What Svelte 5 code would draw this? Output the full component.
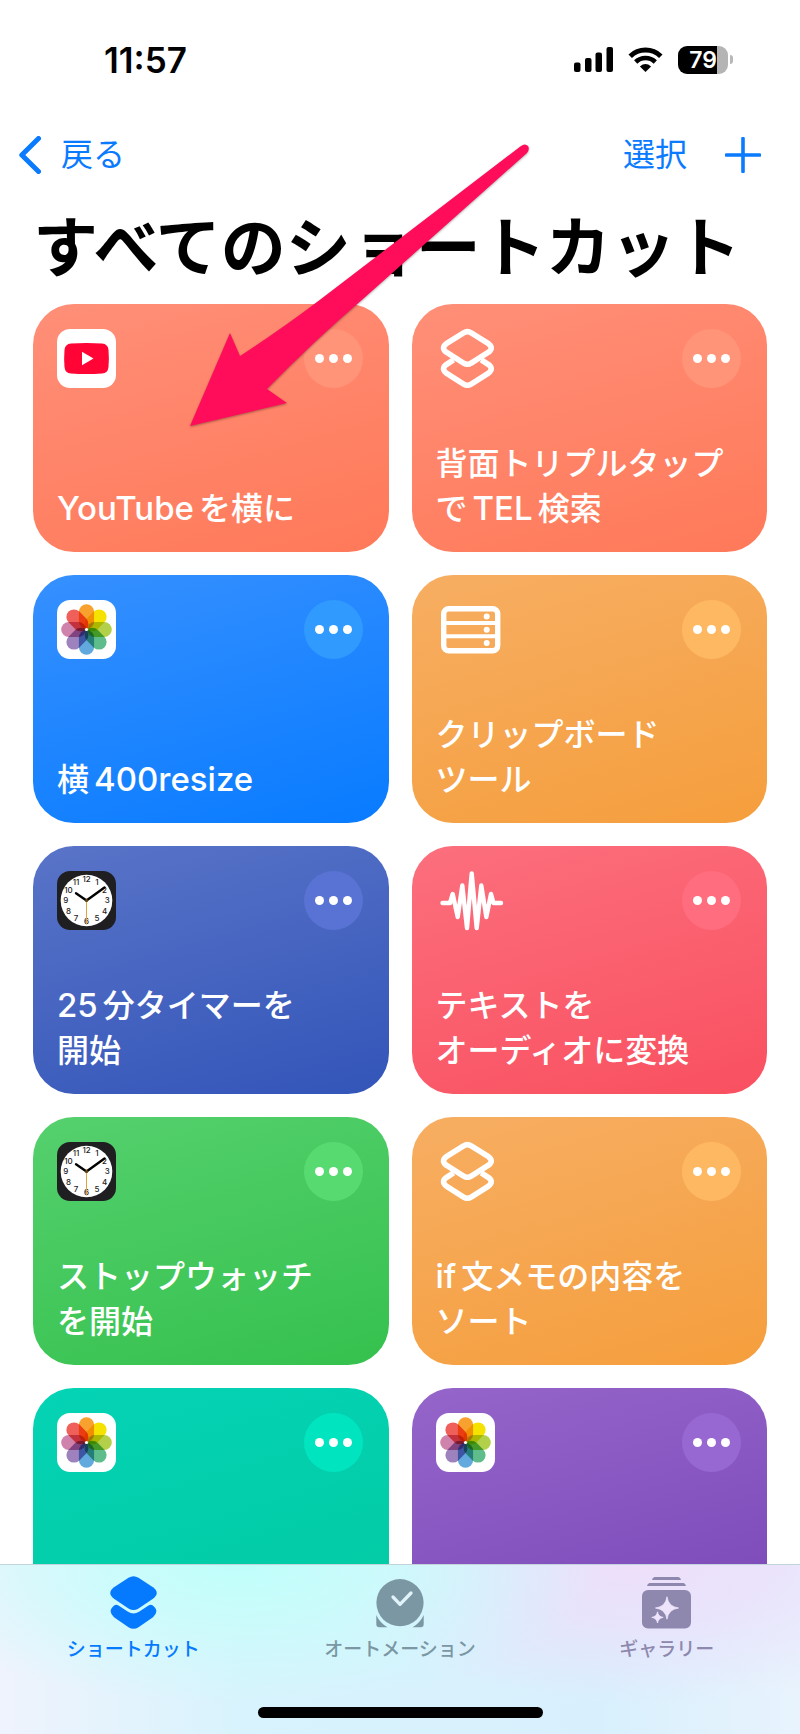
<script>
  const shortcuts = [
    { icon: 'youtube', tone: 'salmon', lines: ['YouTubeを横に'] },
    { icon: 'layers', tone: 'salmon', lines: ['背面トリプルタップ', 'でTEL検索'] },
    { icon: 'photos', tone: 'blue', lines: ['横400resize'] },
    { icon: 'drawers', tone: 'orange', lines: ['クリップボード', 'ツール'] },
    { icon: 'clock', tone: 'indigo', lines: ['25分タイマーを', '開始'] },
    { icon: 'wave', tone: 'red', lines: ['テキストを', 'オーディオに変換'] },
    { icon: 'clock', tone: 'green', lines: ['ストップウォッチ', 'を開始'] },
    { icon: 'layers', tone: 'orange', lines: ['if文メモの内容を', 'ソート'] },
    { icon: 'photos', tone: 'teal', lines: [] },
    { icon: 'photos', tone: 'purple', lines: [] }
  ];

  const petals = ['#f9a12e', '#f6e200', '#b2d04a', '#5fbd8c', '#62a9dd', '#9d82bd', '#cf82ac', '#f0605a'];

  const numerals = Array.from({ length: 12 }, (_, i) => {
    const angle = ((i + 1) * Math.PI) / 6;
    return { n: i + 1, x: 29.5 + 20.8 * Math.sin(angle), y: 32.2 - 20.8 * Math.cos(angle) };
  });

  const split = (line) => line.match(/[A-Za-z0-9]+|[^A-Za-z0-9]+/g);
  const isLatin = (part) => /^[A-Za-z0-9]/.test(part);
</script>

<div class="app">
  <header>
    <div class="status">
      <time>11:57</time>
      <div class="indicators">
        <svg width="39" height="25" viewBox="0 0 39 25" aria-hidden="true">
          <rect x="0" y="15.5" width="6.5" height="9.5" rx="2" />
          <rect x="11" y="11" width="6.5" height="14" rx="2" />
          <rect x="21.5" y="5.5" width="6.5" height="19.5" rx="2" />
          <rect x="32.5" y="0" width="6.5" height="25" rx="2" />
        </svg>
        <svg width="35" height="25" viewBox="0 0 35 25" aria-hidden="true">
          <path d="M2.2 9.2A22 22 0 0 1 32.8 9.2" fill="none" stroke="#000" stroke-width="5" />
          <path d="M7.7 15A14 14 0 0 1 27.3 15" fill="none" stroke="#000" stroke-width="4.6" />
          <path d="M17.5 25L11.9 19.4Q17.5 14.8 23.1 19.4Z" />
        </svg>
        <div class="battery"><span class="level">79</span><span class="nub"></span></div>
      </div>
    </div>
    <nav class="toolbar">
      <button class="back">
        <svg width="22" height="38" viewBox="0 0 22 38" aria-hidden="true">
          <path d="M19.5 2.5L2.8 19L19.5 35.5" fill="none" stroke="currentColor" stroke-width="5" stroke-linecap="round" stroke-linejoin="round" />
        </svg>
        戻る
      </button>
      <div class="actions">
        <button>選択</button>
        <button aria-label="追加">
          <svg width="36" height="36" viewBox="0 0 36 36" aria-hidden="true">
            <path d="M18 1.5V34.5M1.5 18H34.5" fill="none" stroke="currentColor" stroke-width="3.6" stroke-linecap="round" />
          </svg>
        </button>
      </div>
    </nav>
    <h1>すべてのショートカット</h1>
  </header>

  <main>
    {#each shortcuts as item}
      <article class="card {item.tone}">
        <div class="top">
          <svg class="icon" width="59" height="59" viewBox="0 0 59 59" aria-hidden="true">
            {#if item.icon === 'youtube'}
              <rect width="59" height="59" rx="13" fill="#fff" />
              <path d="M14 14.5Q29.5 13.3 45 14.5Q51 15 51.5 21Q52.2 29.5 51.5 38Q51 44 45 44.5Q29.5 45.7 14 44.5Q8 44 7.5 38Q6.8 29.5 7.5 21Q8 15 14 14.5Z" fill="#ff0434" />
              <path d="M25 22.8V36.2L36.5 29.5Z" fill="#fff" />
            {:else if item.icon === 'photos'}
              <rect width="59" height="59" rx="13" fill="#fff" />
              {#each petals as color, i}
                <rect class="petal" x="21.9" y="4.2" width="15.2" height="24.8" rx="7.6" fill={color} transform="rotate({i * 45} 29.5 29.5)" />
              {/each}
              <circle cx="29.5" cy="29.5" r="1.6" fill="#fff" />
            {:else if item.icon === 'clock'}
              <rect width="59" height="59" rx="13" fill="#1f1f22" />
              <circle cx="29.5" cy="29.5" r="25.8" fill="#fff" />
              {#each numerals as mark}
                <text x={mark.x} y={mark.y}>{mark.n}</text>
              {/each}
              <path d="M29.5 29.5L19 22.3M29.5 29.5L47.5 16.5" stroke="#000" stroke-width="2.4" stroke-linecap="round" />
              <path d="M29.5 27V53.5" stroke="#e3a33c" stroke-width="1" />
              <circle cx="29.5" cy="29.5" r="1.6" fill="#5d4317" />
            {:else if item.icon === 'layers'}
              <g fill="none" stroke="#fff" stroke-width="5.6" stroke-linejoin="round">
                <path d="M27.6 3.8Q31.4 1.5 35.2 3.8L52.5 14.7Q58 18.9 52.5 23.2L35.2 34.1Q31.4 36.4 27.6 34.1L10.3 23.2Q4.8 18.9 10.3 14.7Z" />
                <path d="M17.5 30.8L10.3 35.6Q4.8 39.8 10.3 44.1L27.6 55.1Q31.4 57.4 35.2 55.1L52.5 44.1Q58 39.8 52.5 35.6L45.3 30.8" />
              </g>
            {:else if item.icon === 'drawers'}
              <rect x="7.7" y="8.7" width="54" height="42" rx="5" fill="none" stroke="#fff" stroke-width="5.4" />
              <path d="M8 23.1H61M8 36.3H61" stroke="#fff" stroke-width="4" />
              <g fill="#fff">
                <circle cx="50.7" cy="16.5" r="3" />
                <circle cx="50.7" cy="29.7" r="3" />
                <circle cx="50.7" cy="43" r="3" />
              </g>
            {:else}
              <path d="M6.5 32H14L16.7 23L21.7 46L26.3 14.5L31 57L35.7 2.5L40.7 57L45.3 14.5L50.3 46L55 23L57.5 32H65" fill="none" stroke="#fff" stroke-width="4.4" stroke-linecap="round" stroke-linejoin="round" />
            {/if}
          </svg>
          <button class="more" aria-label="編集"><i></i><i></i><i></i></button>
        </div>
        {#if item.lines.length}
          <h2>
            {#each item.lines as line}
              <span class="line">{#each split(line) as part, i}{#if isLatin(part)}<span class="latin" class:inner={i > 0}>{part}</span>{:else}{part}{/if}{/each}</span>
            {/each}
          </h2>
        {/if}
      </article>
    {/each}
  </main>

  <footer>
    <nav class="tabs">
      <a class="active" href="#shortcuts">
        <span class="glyph">
          <svg width="47" height="54" viewBox="0 0 47 54" fill="currentColor" aria-hidden="true">
            <path d="M18.5 1.8Q23.5 -1.2 28.5 1.8L43 11.3Q50.5 17 43 22.7L28.5 32.5Q23.5 35.7 18.5 32.5L4 22.7Q-3.5 17 4 11.3Z" />
            <path d="M4.5 29.3Q6.5 28.3 8.5 29.5L18 35.8Q23.5 39.2 29 35.8L38.5 29.5Q40.5 28.3 42.5 29.3Q50 35 43 41.2L28.5 51.2Q23.5 54.5 18.5 51.2L4 41.2Q-3 35 4.5 29.3Z" />
          </svg>
        </span>
        ショートカット
      </a>
      <a class="automation" href="#automation">
        <span class="glyph">
          <svg width="48" height="49" viewBox="0 0 48 49" aria-hidden="true">
            <path d="M0.3 36A26.6 26.6 0 0 0 11.5 48.3H3.3Q0.3 48.3 0.3 45.3ZM47.7 36A26.6 26.6 0 0 1 36.5 48.3H44.7Q47.7 48.3 47.7 45.3Z" fill="currentColor" />
            <circle cx="24" cy="23.7" r="23.6" fill="currentColor" />
            <path d="M17 18L24 25.3L35 14" fill="none" stroke="#e0f3fb" stroke-width="3.3" stroke-linecap="round" stroke-linejoin="round" />
          </svg>
        </span>
        オートメーション
      </a>
      <a class="gallery" href="#gallery">
        <span class="glyph">
          <svg width="49" height="52" viewBox="0 0 49 52" fill="currentColor" aria-hidden="true">
            <path d="M12.5 0H36.5Q38.5 0.5 39 3H10Q10.5 0.5 12.5 0ZM7.5 6H41.5Q43.5 6.5 44 9H5Q5.5 6.5 7.5 6Z" />
            <rect y="13" width="49" height="38.5" rx="6" />
            <path d="M25 19.8Q26.3 29.7 36.5 31Q26.3 32.3 25 42.2Q23.7 32.3 13.5 31Q23.7 29.7 25 19.8ZM15.5 34.8Q16.2 39.7 21.2 40.4Q16.2 41.1 15.5 46Q14.8 41.1 9.8 40.4Q14.8 39.7 15.5 34.8Z" fill="#eee4fb" stroke="#eee4fb" stroke-width="0.8" />
          </svg>
        </span>
        ギャラリー
      </a>
    </nav>
    <div class="home"></div>
  </footer>

  <svg class="pointer" width="345" height="290" viewBox="0 0 345 290" aria-hidden="true">
    <path d="M5 285L45 192L55 215Q98 187 136 158L336 5Q340 2 343 5Q345 8 342 12L178 158Q130 199 82 248L102 262Z" fill="#ff0d5b" />
  </svg>
</div>

<style>
  :global(body) {
    margin: 0;
    background: #fff;
  }

  .app {
    position: relative;
    display: flex;
    flex-direction: column;
    height: 100vh;
    overflow: hidden;
    background: #fff;
    color: #000;
    font-family: Inter, 'Noto Sans CJK JP', sans-serif;
  }

  header {
    flex: none;
  }

  .status {
    display: flex;
    align-items: center;
    justify-content: space-between;
    height: 119px;
    padding: 0 67px 0 104px;
    box-sizing: border-box;
  }

  time {
    font-size: 35px;
    line-height: 40px;
    font-weight: 600;
  }

  .indicators {
    display: flex;
    align-items: center;
    gap: 15px;
  }

  .battery {
    display: flex;
    align-items: center;
    gap: 2px;
  }

  .level {
    width: 50px;
    border-radius: 9px;
    background: linear-gradient(90deg, #000 79%, #b4b4b4 79%);
    color: #fff;
    font-size: 23px;
    line-height: 28px;
    font-weight: 600;
    text-align: center;
  }

  .nub {
    width: 3px;
    height: 9px;
    border-radius: 0 3px 3px 0;
    background: #b8b8b8;
  }

  button {
    display: flex;
    align-items: center;
    padding: 0;
    border: 0;
    background: none;
    color: inherit;
    font: inherit;
  }

  .toolbar {
    display: flex;
    align-items: center;
    justify-content: space-between;
    height: 71px;
    padding: 0 39px 0 19px;
    color: #0a7aff;
    font-size: 32px;
    line-height: 48px;
  }

  .back {
    gap: 20px;
  }

  .actions {
    display: flex;
    gap: 38px;
  }

  h1 {
    margin: 0;
    padding: 18px 33px 16px;
    font-size: 65px;
    line-height: 80px;
    font-weight: 700;
    white-space: nowrap;
  }

  main {
    flex: 1;
    min-height: 0;
    overflow: hidden;
    display: grid;
    grid-template-columns: 1fr 1fr;
    grid-auto-rows: 248px;
    gap: 23px;
    padding: 0 33px;
  }

  .card {
    display: flex;
    flex-direction: column;
    justify-content: space-between;
    padding: 25px 26px 21px 24px;
    border-radius: 41px;
    background: linear-gradient(164deg, var(--from), var(--to));
    color: #fff;
  }

  .salmon { --from: #ff8f78; --to: #ff7959; --chip: #ff9478; }
  .blue { --from: #3690ff; --to: #087bff; --chip: #319aff; }
  .orange { --from: #f7ae62; --to: #f59e3d; --chip: #ffb862; }
  .indigo { --from: #5974c8; --to: #3355b9; --chip: #5873d3; }
  .red { --from: #fc6f7d; --to: #f95060; --chip: #ff6d7f; }
  .green { --from: #55d06d; --to: #35c14e; --chip: #57db70; }
  .teal { --from: #04d3b5; --to: #02caa2; --chip: #00e5c0; }
  .purple { --from: #9565ca; --to: #7a47b7; --chip: #9868d2; }

  .top {
    display: flex;
    justify-content: space-between;
  }

  .icon {
    overflow: visible;
    isolation: isolate;
  }

  .petal {
    mix-blend-mode: multiply;
  }

  .icon text {
    fill: #222;
    font-size: 8px;
    font-weight: 500;
    text-anchor: middle;
  }

  .more {
    justify-content: center;
    gap: 5px;
    width: 59px;
    height: 59px;
    border-radius: 50%;
    background: var(--chip);
  }

  .more i {
    width: 9px;
    height: 9px;
    border-radius: 50%;
    background: #fff;
  }

  h2 {
    margin: 0;
    font-size: 32px;
    line-height: 45px;
    font-weight: 500;
    white-space: nowrap;
  }

  .line {
    display: block;
    height: 45px;
  }

  .latin {
    margin-right: 5px;
    font-size: 33px;
    font-weight: 550;
  }

  .latin.inner {
    margin-left: 5px;
  }

  footer {
    flex: none;
    padding: 11px 0 16px;
    border-top: 1px solid #c3d3da;
    background:
      radial-gradient(ellipse 360px 140px at 30% 0, #c0fffb 0%, #c8fdfbcc 40%, #c8fdfb00 100%),
      radial-gradient(ellipse 340px 140px at 80% 0, #eedffb 0%, #ebe0fbcc 40%, #ebe0fb00 100%),
      linear-gradient(90deg, #eff3fd 0%, #d8f3fd 30%, #d8f0fd 75%, #e8f3fd 100%);
  }

  .tabs {
    display: grid;
    grid-template-columns: repeat(3, 1fr);
  }

  .tabs a {
    display: flex;
    flex-direction: column;
    align-items: center;
    gap: 8px;
    font-size: 19px;
    line-height: 24px;
    font-weight: 500;
    text-decoration: none;
  }

  .glyph {
    display: flex;
    align-items: center;
    height: 54px;
  }

  .active { color: #067aff; }
  .automation { color: #7b97a3; }
  .gallery { color: #8e88ae; }

  .home {
    width: 285px;
    height: 11px;
    margin: 45px auto 0;
    border-radius: 6px;
    background: #000;
  }

  .pointer {
    position: absolute;
    left: 185px;
    top: 141px;
    filter: drop-shadow(0 1px 1px #0005);
    pointer-events: none;
  }
</style>
